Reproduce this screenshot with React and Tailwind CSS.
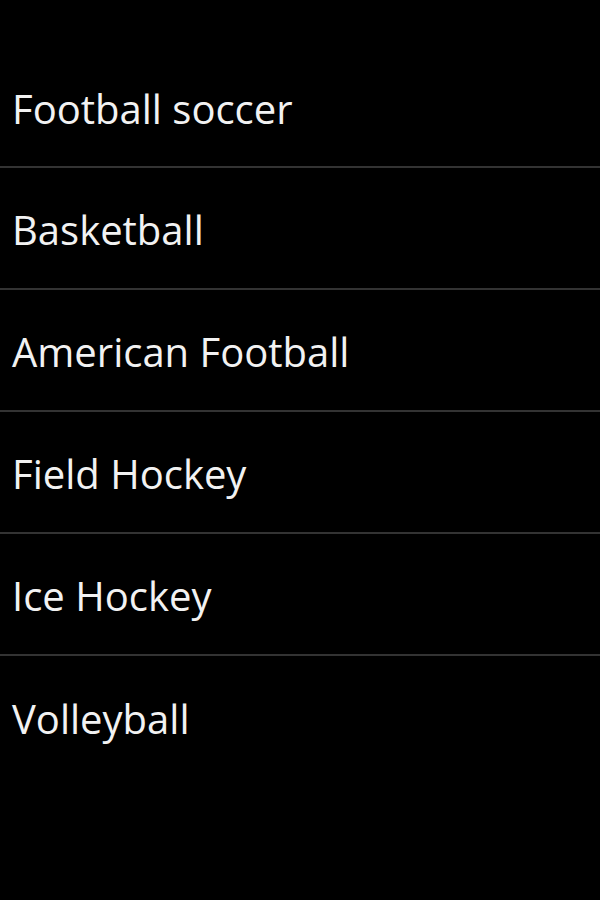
const sports = [
  "Football soccer",
  "Basketball",
  "American Football",
  "Field Hockey",
  "Ice Hockey",
  "Volleyball",
];

export default function App() {
  return (
    <div className="w-[600px] h-[900px] bg-black pt-[48px] font-['Open_Sans',sans-serif]">
      <ul className="divide-y-2 divide-[#333333]">
        {sports.map((s) => (
          <li key={s} className="h-[122px] first:h-[120px] flex items-center pl-3 pt-[3px] text-[40px] text-[#f2f2f2]">
            {s}
          </li>
        ))}
      </ul>
    </div>
  );
}
